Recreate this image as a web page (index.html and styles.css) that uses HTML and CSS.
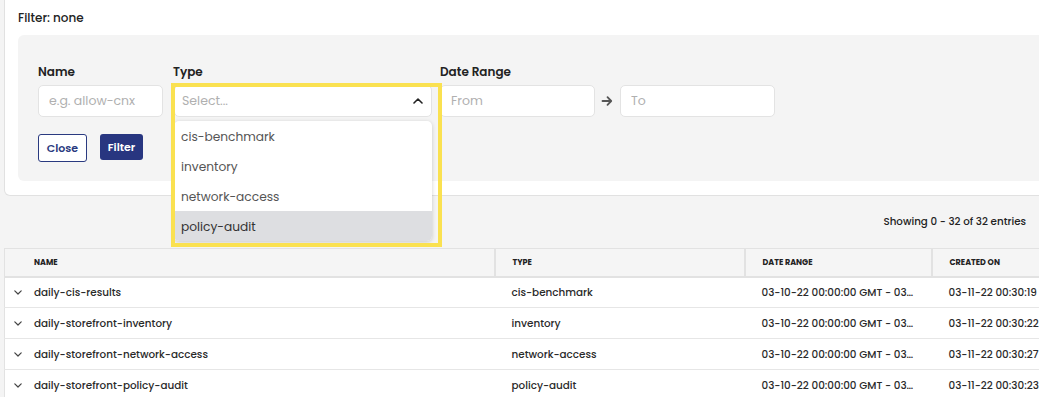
FILE: index.html
```html
<!DOCTYPE html>
<html lang="en">
<head>
    <meta charset="UTF-8">
    <meta name="viewport" content="width=device-width, initial-scale=1.0">
    <title>Reports</title>
    <link rel="stylesheet" href="styles.css">
</head>
<body>
    <div class="page">
        <section class="filter-card">
            <div class="filter-title">Filter: none</div>

            <div class="filter-panel">
                <div class="field-row">
                    <div class="field field-name">
                        <label>Name</label>
                        <input type="text" class="text-input" placeholder="e.g. allow-cnx">
                    </div>

                    <div class="field field-type">
                        <label>Type</label>
                        <div class="select-wrap">
                            <div class="select-box">
                                <span class="select-placeholder">Select...</span>
                                <svg class="chevron-up" width="10" height="6" viewBox="0 0 10 6">
                                    <path d="M1 5 L5 1 L9 5" fill="none" stroke="#222" stroke-width="1.6" stroke-linecap="round" stroke-linejoin="round"/>
                                </svg>
                            </div>
                            <ul class="select-menu">
                                <li>cis-benchmark</li>
                                <li>inventory</li>
                                <li>network-access</li>
                                <li class="active">policy-audit</li>
                            </ul>
                            <div class="highlight"></div>
                        </div>
                    </div>

                    <div class="field field-date">
                        <label>Date Range</label>
                        <div class="date-range">
                            <input type="text" class="text-input date-input" placeholder="From">
                            <svg class="arrow" width="12" height="12" viewBox="0 0 12 12">
                                <path d="M1.5 6 H10 M6.5 2.2 L10.2 6 L6.5 9.8" fill="none" stroke="#555" stroke-width="1.8" stroke-linecap="round" stroke-linejoin="round"/>
                            </svg>
                            <input type="text" class="text-input date-input" placeholder="To">
                        </div>
                    </div>
                </div>

                <div class="button-row">
                    <button class="btn btn-outline">Close</button>
                    <button class="btn btn-solid">Filter</button>
                </div>
            </div>
        </section>

        <div class="table-toolbar">
            <span>Showing 0 - 32 of 32 entries</span>
        </div>

        <table class="report-table">
            <colgroup>
                <col class="col-name">
                <col class="col-type">
                <col class="col-date">
                <col class="col-created">
            </colgroup>
            <thead>
                <tr>
                    <th class="name-cell">Name</th>
                    <th>Type</th>
                    <th>Date Range</th>
                    <th>Created On</th>
                </tr>
            </thead>
            <tbody>
                <tr>
                    <td class="name-cell"><span class="expander"><svg width="8" height="5" viewBox="0 0 8 5"><path d="M0.8 0.8 L4 4 L7.2 0.8" fill="none" stroke="#444" stroke-width="1.2" stroke-linecap="round" stroke-linejoin="round"/></svg></span>daily-cis-results</td>
                    <td>cis-benchmark</td>
                    <td>03-10-22 00:00:00 GMT - 03-11-22 00:00:00 GMT</td>
                    <td>03-11-22 00:30:19 GMT</td>
                </tr>
                <tr>
                    <td class="name-cell"><span class="expander"><svg width="8" height="5" viewBox="0 0 8 5"><path d="M0.8 0.8 L4 4 L7.2 0.8" fill="none" stroke="#444" stroke-width="1.2" stroke-linecap="round" stroke-linejoin="round"/></svg></span>daily-storefront-inventory</td>
                    <td>inventory</td>
                    <td>03-10-22 00:00:00 GMT - 03-11-22 00:00:00 GMT</td>
                    <td>03-11-22 00:30:22 GMT</td>
                </tr>
                <tr>
                    <td class="name-cell"><span class="expander"><svg width="8" height="5" viewBox="0 0 8 5"><path d="M0.8 0.8 L4 4 L7.2 0.8" fill="none" stroke="#444" stroke-width="1.2" stroke-linecap="round" stroke-linejoin="round"/></svg></span>daily-storefront-network-access</td>
                    <td>network-access</td>
                    <td>03-10-22 00:00:00 GMT - 03-11-22 00:00:00 GMT</td>
                    <td>03-11-22 00:30:27 GMT</td>
                </tr>
                <tr>
                    <td class="name-cell"><span class="expander"><svg width="8" height="5" viewBox="0 0 8 5"><path d="M0.8 0.8 L4 4 L7.2 0.8" fill="none" stroke="#444" stroke-width="1.2" stroke-linecap="round" stroke-linejoin="round"/></svg></span>daily-storefront-policy-audit</td>
                    <td>policy-audit</td>
                    <td>03-10-22 00:00:00 GMT - 03-11-22 00:00:00 GMT</td>
                    <td>03-11-22 00:30:23 GMT</td>
                </tr>
            </tbody>
        </table>
    </div>
</body>
</html>
```

FILE: styles.css
```css
* {
    box-sizing: border-box;
}

body {
    margin: 0;
    font-family: 'Poppins', 'Inter', 'Open Sans', sans-serif;
    background-color: #f4f4f4;
    color: #222;
    overflow: hidden;
}

.page {
    width: 1140px;
    padding-left: 4px;
}

.filter-card {
    background-color: white;
    border: 1px solid #e1e1e1;
    border-top: none;
    border-radius: 0 0 6px 6px;
    padding: 10px 0 14px 13px;
}

.filter-title {
    font-size: 12px;
    font-weight: 500;
    line-height: 16px;
    margin-bottom: 9px;
}

.filter-panel {
    background-color: #f4f4f4;
    border-radius: 6px 0 0 6px;
    padding: 28px 20px 19px 20px;
}

.field-row {
    display: flex;
    gap: 10px;
}

.field label {
    display: block;
    font-size: 12px;
    font-weight: 600;
    line-height: 18px;
    margin-bottom: 4px;
}

.text-input {
    height: 32px;
    border: 1px solid #e3e3e3;
    border-radius: 5px;
    background-color: white;
    padding: 0 10px;
    font-family: inherit;
    font-size: 12.5px;
    color: #333;
}

.text-input::placeholder {
    color: #b0b0b0;
}

.field-name .text-input {
    width: 125px;
}

.field-type {
    width: 259px;
}

.select-wrap {
    position: relative;
    padding-left: 1px;
}

.select-box {
    height: 32px;
    background-color: white;
    border: 1px solid #e3e3e3;
    border-radius: 5px;
    display: flex;
    align-items: center;
    justify-content: space-between;
    padding: 0 8px 0 7px;
}

.select-placeholder {
    font-size: 12.5px;
    color: #b0b0b0;
}

.select-menu {
    position: absolute;
    top: 36px;
    left: 1px;
    width: 258px;
    margin: 0;
    padding: 0;
    list-style: none;
    background-color: white;
    border-radius: 5px;
    box-shadow: 0 1px 4px rgba(0, 0, 0, 0.18);
    overflow: hidden;
    z-index: 2;
}

.select-menu li {
    height: 30px;
    line-height: 32px;
    padding-left: 7px;
    font-size: 12.2px;
    color: #555;
}

.select-menu li.active {
    background-color: #dddee1;
    color: #333;
}

/* yellow annotation box round the open select */
.highlight {
    position: absolute;
    top: -2px;
    left: -2px;
    width: 271px;
    height: 164px;
    border: 4px solid #fae150;
    z-index: 3;
}

.field-date {
    margin-left: -2px;
}

.date-range {
    display: flex;
    align-items: center;
    gap: 6px;
}

.date-input {
    width: 155px;
}

.date-input:last-child {
    margin-left: 1px;
}

.button-row {
    display: flex;
    gap: 13px;
    margin-top: 17px;
}

.btn {
    font-family: inherit;
    font-size: 11px;
    font-weight: 600;
    border-radius: 3px;
    cursor: pointer;
}

.btn-outline {
    width: 49px;
    height: 28px;
    background-color: white;
    color: #2a3a80;
    border: 1px solid #2a3a80;
}

.btn-solid {
    width: 43px;
    height: 26px;
    background-color: #283680;
    color: white;
    border: none;
}

.table-toolbar {
    width: 1022px;
    height: 52px;
    display: flex;
    align-items: center;
    justify-content: flex-end;
    font-size: 10.3px;
    font-weight: 500;
    color: #222;
}

.report-table {
    border-collapse: collapse;
    table-layout: fixed;
    width: 1127px;
    background-color: white;
    border-left: 1px solid #e2e2e2;
    border-top: 1px solid #e2e2e2;
}

.col-name {
    width: 490px;
}

.col-type {
    width: 250px;
}

.col-date {
    width: 187px;
}

.col-created {
    width: 200px;
}

.report-table th {
    height: 28px;
    background-color: #f5f5f5;
    text-align: left;
    text-transform: uppercase;
    font-size: 8px;
    font-weight: 700;
    color: #222;
    padding: 1px 17px 0 17px;
    border-left: 2px solid #e2e2e2;
    border-bottom: 2px solid #e2e2e2;
}

.report-table th:first-child {
    border-left: none;
}

.report-table td {
    height: 31px;
    font-size: 10.4px;
    font-weight: 500;
    color: #2a2a2a;
    padding: 2px 14px 0 17px;
    border-bottom: 1px solid #e6e6e6;
    white-space: nowrap;
    overflow: hidden;
    text-overflow: ellipsis;
}

.report-table .name-cell {
    padding-left: 29px;
}

.report-table td.name-cell {
    padding-left: 9px;
}

.expander {
    display: inline-block;
    width: 20px;
    vertical-align: middle;
    line-height: 0;
    margin-top: -2px;
}
```
